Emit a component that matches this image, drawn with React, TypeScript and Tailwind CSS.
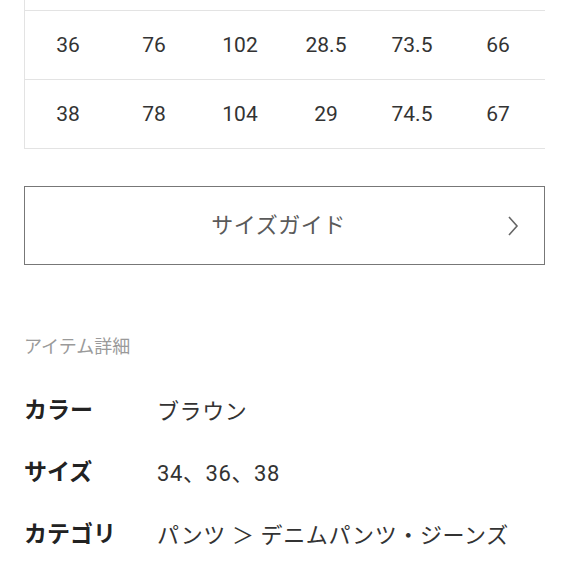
import React from "react";

const rows = [
  ["36", "76", "102", "28.5", "73.5", "66"],
  ["38", "78", "104", "29", "74.5", "67"],
];

const details: [string, string][] = [
  ["カラー", "ブラウン"],
  ["サイズ", "34、36、38"],
  ["カテゴリ", "パンツ ＞ デニムパンツ・ジーンズ"],
];

export default function App() {
  return (
    <div
      className="w-[569px] h-[569px] overflow-hidden bg-white"
      style={{ fontFamily: 'Roboto, "Noto Sans CJK JP", sans-serif' }}
    >
      <div className="ml-[24px] w-[521px] border-l border-[#e3e3e3]">
        <div className="h-[10px]" />
        {rows.map((r, i) => (
          <div
            key={i}
            className="flex h-[69px] items-center border-t border-[#e3e3e3] pt-[2px]"
          >
            {r.map((c, j) => (
              <div
                key={j}
                className="w-[86px] shrink-0 text-center text-[21px] text-[#333]"
              >
                {c}
              </div>
            ))}
          </div>
        ))}
        <div className="h-px bg-[#e3e3e3]" />
      </div>

      <div className="mx-[24px] mt-[37px] flex h-[79px] items-center justify-center border border-[#777] relative pr-[12px]">
        <span className="text-[22px] text-[#5a5a5a] tracking-[0.5px]">サイズガイド</span>
        <svg
          className="absolute right-[24px] top-1/2 -translate-y-1/2"
          width="14"
          height="22"
          viewBox="0 0 14 22"
          fill="none"
        >
          <path d="M3 2 L11 11 L3 20" stroke="#666" strokeWidth="1.6" />
        </svg>
      </div>

      <div className="ml-[24px] mt-[70px] text-[18px] leading-[24px] text-[#9a9a9a]">
        アイテム詳細
      </div>

      <div className="ml-[24px] mt-[36px] flex flex-col gap-[30px]">
        {details.map(([k, v]) => (
          <div key={k} className="flex items-center h-[32px]">
            <div className="w-[133px] text-[23px] font-bold text-[#222]">{k}</div>
            <div className="text-[22px] text-[#333] whitespace-pre tracking-[0.6px]">{v}</div>
          </div>
        ))}
      </div>
    </div>
  );
}
